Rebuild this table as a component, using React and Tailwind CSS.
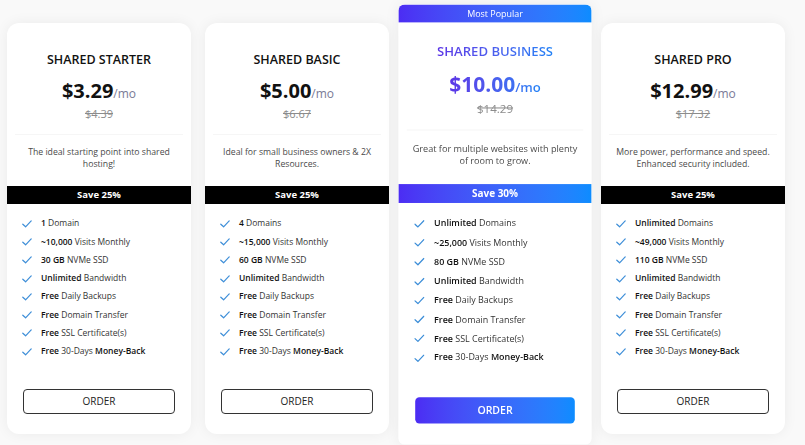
import React from "react";

const plans = [
  {
    name: "SHARED STARTER",
    price: "$3.29",
    old: "$4.39",
    desc: "The ideal starting point into shared hosting!",
    save: "Save 25%",
    features: [
      ["1", " Domain"],
      ["~10,000", " Visits Monthly"],
      ["30 GB", " NVMe SSD"],
      ["Unlimited", " Bandwidth"],
      ["Free", " Daily Backups"],
      ["Free", " Domain Transfer"],
      ["Free", " SSL Certificate(s)"],
      ["Free", " 30-Days ", "Money-Back"],
    ],
  },
  {
    name: "SHARED BASIC",
    price: "$5.00",
    old: "$6.67",
    desc: "Ideal for small business owners & 2X Resources.",
    save: "Save 25%",
    features: [
      ["4", " Domains"],
      ["~15,000", " Visits Monthly"],
      ["60 GB", " NVMe SSD"],
      ["Unlimited", " Bandwidth"],
      ["Free", " Daily Backups"],
      ["Free", " Domain Transfer"],
      ["Free", " SSL Certificate(s)"],
      ["Free", " 30-Days ", "Money-Back"],
    ],
  },
  {
    name: "SHARED BUSINESS",
    price: "$10.00",
    old: "$14.29",
    desc: "Great for multiple websites with plenty of room to grow.",
    save: "Save 30%",
    popular: true,
    features: [
      ["Unlimited", " Domains"],
      ["~25,000", " Visits Monthly"],
      ["80 GB", " NVMe SSD"],
      ["Unlimited", " Bandwidth"],
      ["Free", " Daily Backups"],
      ["Free", " Domain Transfer"],
      ["Free", " SSL Certificate(s)"],
      ["Free", " 30-Days ", "Money-Back"],
    ],
  },
  {
    name: "SHARED PRO",
    price: "$12.99",
    old: "$17.32",
    desc: "More power, performance and speed. Enhanced security included.",
    save: "Save 25%",
    features: [
      ["Unlimited", " Domains"],
      ["~49,000", " Visits Monthly"],
      ["110 GB", " NVMe SSD"],
      ["Unlimited", " Bandwidth"],
      ["Free", " Daily Backups"],
      ["Free", " Domain Transfer"],
      ["Free", " SSL Certificate(s)"],
      ["Free", " 30-Days ", "Money-Back"],
    ],
  },
];

function Check() {
  return (
    <svg width="10" height="8" viewBox="0 0 10 8" className="shrink-0">
      <path d="M0.8 4.2 L3.6 6.8 L9.2 0.9" fill="none" stroke="#3d8ed8" strokeWidth="1.2" strokeLinecap="round" strokeLinejoin="round" />
    </svg>
  );
}

function Card({ p }) {
  const pop = p.popular;
  return (
    <div
      className={
        "w-[184px] shrink-0 bg-white shadow-[0_0_14px_rgba(0,0,0,0.06)] flex flex-col " +
        (pop ? "scale-105 rounded-[6px] overflow-hidden" : "mt-[8px] rounded-[12px]")
      }
    >
      {pop && (
        <div className="h-[17px] bg-gradient-to-r from-[#4c2cf3] to-[#0c8cff] text-white text-[8.5px] leading-[17px] text-center">
          Most Popular
        </div>
      )}
      <div className={"flex flex-col items-center " + (pop ? "pt-[19.5px]" : "pt-[29px]")}>
        <div
          className={
            "h-[16px] leading-[16px] text-[12.5px] font-semibold " +
            (pop
              ? "bg-gradient-to-r from-[#5b33e6] to-[#1f82f6] bg-clip-text text-transparent"
              : "text-[#111]")
          }
        >
          {p.name}
        </div>
        <div className="mt-[11px] h-[24px] leading-[24px] flex items-baseline">
          {pop ? (
            <span className="bg-gradient-to-r from-[#5b33e6] to-[#1f82f6] bg-clip-text text-transparent font-bold">
              <span className="text-[20px]">{p.price}</span>
              <span className="text-[12.5px] font-semibold">/mo</span>
            </span>
          ) : (
            <>
              <span className="text-[20px] font-bold text-[#111]">{p.price}</span>
              <span className="text-[12px] text-[#7a7a96]">/mo</span>
            </>
          )}
        </div>
        <div className="mt-[4px] h-[14px] leading-[14px] text-[11px] text-[#8c8c8c] line-through">{p.old}</div>
      </div>
      <div className="mt-[13px] mx-[8px] h-px bg-[#f6f6f6]" />
      <div className="mt-[11px] h-[25px] px-[13px] text-center text-[8.7px] leading-[12.5px] text-[#4a4a4a]">{p.desc}</div>
      <div
        className={
          "mt-[15px] h-[18px] leading-[18px] text-center text-white text-[9.5px] font-bold " +
          (pop ? "bg-gradient-to-r from-[#4c2cf3] to-[#0c8cff]" : "bg-black")
        }
      >
        {p.save}
      </div>
      <ul className="mt-[11px] px-[15px] flex flex-col">
        {p.features.map((f, i) => (
          <li key={i} className="h-[18.3px] flex items-center gap-[9px] text-[8.5px] text-[#333]">
            <Check />
            <span>
              <span className="font-semibold text-[#111]">{f[0]}</span>
              {f[1]}
              {f[2] && <span className="font-semibold text-[#111]">{f[2]}</span>}
            </span>
          </li>
        ))}
      </ul>
      <div className="mt-[28px] mb-[20px] px-[16px]">
        {pop ? (
          <div className="h-[25px] rounded-[4px] bg-gradient-to-r from-[#4c2cf3] to-[#0c8cff] text-white text-[10px] font-semibold leading-[25px] text-center">
            ORDER
          </div>
        ) : (
          <div className="h-[25px] rounded-[4px] border border-[#333] text-[#222] text-[10px] font-medium leading-[23px] text-center">
            ORDER
          </div>
        )}
      </div>
    </div>
  );
}

export default function App() {
  return (
    <div
      className="w-[805px] h-[445px] overflow-hidden bg-[#f9f9f9] flex items-start gap-[14px] pl-[7px] pt-[14.5px]"
      style={{ fontFamily: "'Open Sans', 'Liberation Sans', sans-serif" }}
    >
      {plans.map((p) => (
        <Card key={p.name} p={p} />
      ))}
    </div>
  );
}
